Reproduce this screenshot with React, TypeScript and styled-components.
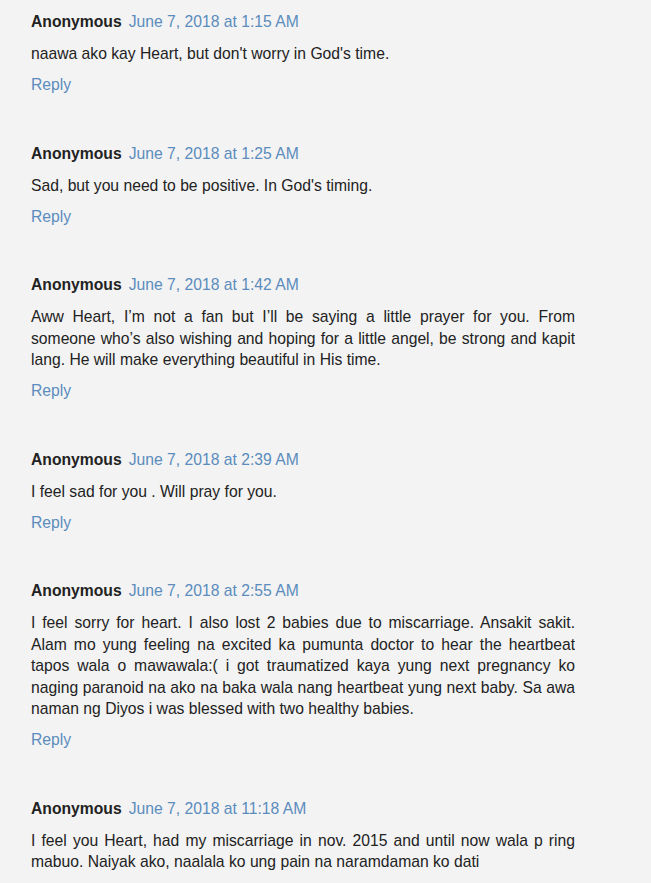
import styled, { createGlobalStyle } from "styled-components";

const comments = [
    {
        date: "June 7, 2018 at 1:15 AM",
        text: "naawa ako kay Heart, but don't worry in God's time.",
    },
    {
        date: "June 7, 2018 at 1:25 AM",
        text: "Sad, but you need to be positive. In God's timing.",
    },
    {
        date: "June 7, 2018 at 1:42 AM",
        text: "Aww Heart, I’m not a fan but I’ll be saying a little prayer for you. From someone who’s also wishing and hoping for a little angel, be strong and kapit lang. He will make everything beautiful in His time.",
    },
    {
        date: "June 7, 2018 at 2:39 AM",
        text: "I feel sad for you . Will pray for you.",
    },
    {
        date: "June 7, 2018 at 2:55 AM",
        text: "I feel sorry for heart. I also lost 2 babies due to miscarriage. Ansakit sakit. Alam mo yung feeling na excited ka pumunta doctor to hear the heartbeat tapos wala o mawawala:( i got traumatized kaya yung next pregnancy ko naging paranoid na ako na baka wala nang heartbeat yung next baby. Sa awa naman ng Diyos i was blessed with two healthy babies.",
    },
    {
        date: "June 7, 2018 at 11:18 AM",
        text: "I feel you Heart, had my miscarriage in nov. 2015 and until now wala p ring mabuo. Naiyak ako, naalala ko ung pain na naramdaman ko dati",
        last: true,
    },
];

const GlobalStyle = createGlobalStyle`
    html, body {
        margin: 0;
        background: #f3f3f3;
    }
    body {
        font-family: "Liberation Sans", Arial, sans-serif;
        color: #222;
    }
`;

const Thread = styled.div`
    display: flex;
    flex-direction: column;
    gap: 46.6px;
    width: 544px;
    padding: 11px 0 0 31px;
    height: 872px;
    overflow: hidden;
`;

const Comment = styled.div`
    display: flex;
    flex-direction: column;
    gap: 9px;
`;

const Header = styled.div`
    font-size: 15.7px;
    line-height: 22px;
    white-space: nowrap;
`;

const Author = styled.span`
    font-weight: bold;
    color: #222;
`;

const Timestamp = styled.a`
    margin-left: 7px;
    color: #5b8cbd;
    text-decoration: none;
`;

const Body = styled.p`
    margin: 1px 0 0.5px;
    font-size: 15.7px;
    line-height: 21.5px;
    text-align: justify;
`;

const Reply = styled.a`
    font-size: 15.7px;
    line-height: 22px;
    color: #5b8cbd;
    text-decoration: none;
`;

export default function App() {
    return (
        <>
            <GlobalStyle />
            <Thread>
                {comments.map((c) => (
                    <Comment key={c.date}>
                        <Header>
                            <Author>Anonymous</Author>
                            <Timestamp>{c.date}</Timestamp>
                        </Header>
                        <Body>{c.text}</Body>
                        {!c.last && <Reply>Reply</Reply>}
                    </Comment>
                ))}
            </Thread>
        </>
    );
}
